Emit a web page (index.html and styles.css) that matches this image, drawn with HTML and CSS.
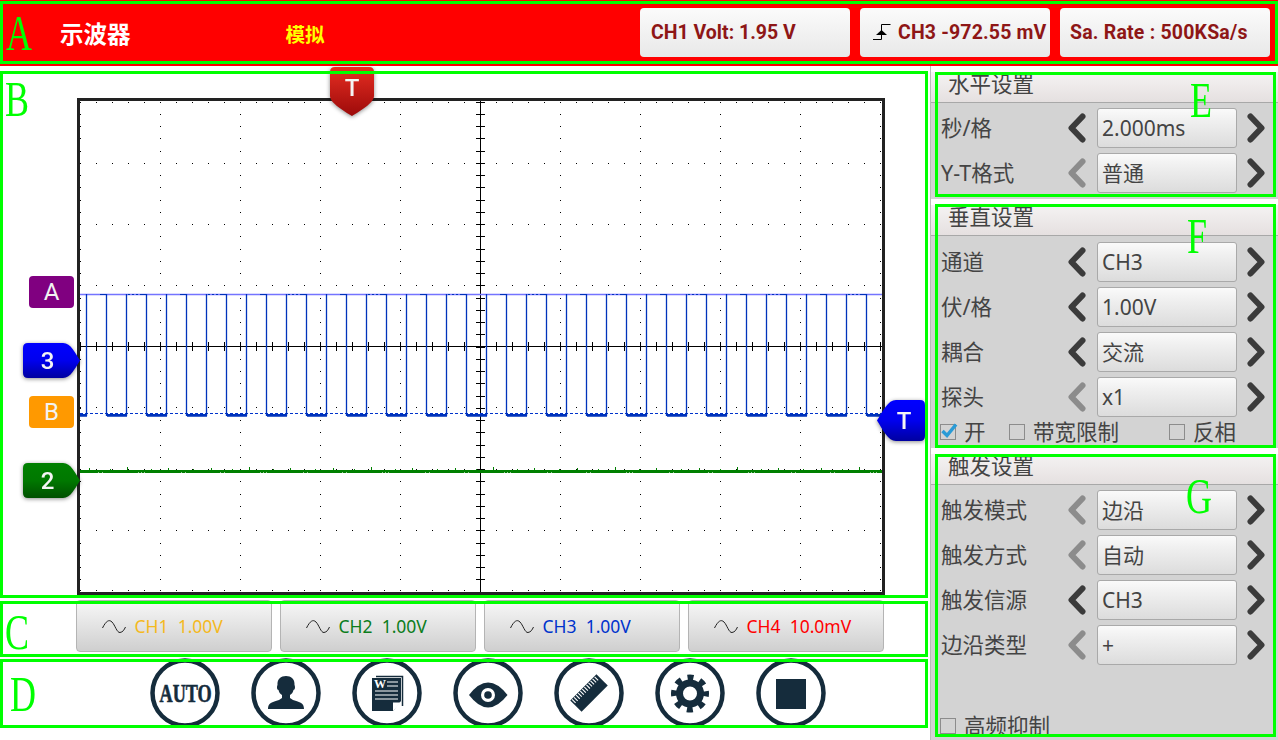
FILE: index.html
```html
<!DOCTYPE html>
<html lang="zh-CN">
<head>
    <meta charset="UTF-8">
    <meta name="viewport" content="width=device-width, initial-scale=1.0">
    <title>示波器</title>
    <link rel="stylesheet" href="styles.css">
</head>
<body>
    <svg class="defs" width="0" height="0">
        <defs>
            <linearGradient id="gradBlue" x1="0" y1="0" x2="0" y2="1"><stop offset="0" stop-color="#0000ff"/><stop offset="0.5" stop-color="#0000ee"/><stop offset="1" stop-color="#0000a0"/></linearGradient>
            <linearGradient id="gradGreen" x1="0" y1="0" x2="0" y2="1"><stop offset="0" stop-color="#008000"/><stop offset="0.5" stop-color="#007800"/><stop offset="1" stop-color="#005000"/></linearGradient>
            <linearGradient id="gradRed" x1="0" y1="0" x2="0" y2="1"><stop offset="0" stop-color="#e62e22"/><stop offset="1" stop-color="#9c0a0a"/></linearGradient>
        </defs>
    </svg>

    <header class="topbar">
        <span class="frame"></span>
        <span class="tag tag-a">A</span>
        <h1 class="app-title">示波器</h1>
        <span class="mode">模拟</span>
        <div class="readouts">
            <div class="readout readout-volt">CH1 Volt: 1.95 V</div>
            <div class="readout readout-trig">
                <svg class="edge-icon" width="18" height="17" viewBox="0 0 18 17">
                    <path d="M0 15.5H8.5V0.5H17.5" fill="none" stroke="#000" stroke-width="1"/>
                    <path d="M3 11L8.5 6L14 11Z" fill="#000"/>
                </svg>
                <span>CH3 -972.55 mV</span>
            </div>
            <div class="readout readout-rate">Sa. Rate : 500KSa/s</div>
        </div>
    </header>

    <div class="workspace">
        <main class="left">
            <section class="scope-area">
                <div class="scope">
                    <svg class="trace" width="802" height="491" viewBox="0 0 802 491">
                        <defs>
                            <pattern id="wave" patternUnits="userSpaceOnUse" x="-4" y="0" width="80" height="491">
                                <path d="M10.500 193V315M30.500 193V315M50.500 193V315M70.500 193V315" stroke="#0033bb" stroke-width="1.300" fill="none"/>
                                <path d="M24 193.500H31M52 193.500H54M56 193.500H58M60 193.500H62M64 193.500H71" stroke="#0033bb" fill="none"/>
                                <path d="M0 314.300H11M31 314.300H51M71 314.300H80" stroke="#0033bb" stroke-width="2.700" fill="none"/>
                            </pattern>
                            <pattern id="noise" patternUnits="userSpaceOnUse" x="0" y="360" width="122" height="20">
                                <path d="M9.500 7v2M30.500 8v1M47.500 6v3M71.500 8v1M88.500 7v2M113.500 8v1" stroke="#008000" fill="none"/>
                                <path d="M18.500 11v1M22.500 11v1M58.500 11v1M61.500 11v1M64.500 11v1M101.500 11v1M105.500 11v1" stroke="#fff" stroke-opacity="0.600" fill="none"/>
                            </pattern>
                        </defs>
                        <g class="dots-row">
                            <line x1="0" y1="1.5" x2="802" y2="1.5"/>
                            <line x1="0" y1="62.5" x2="802" y2="62.5"/>
                            <line x1="0" y1="123.5" x2="802" y2="123.5"/>
                            <line x1="0" y1="184.5" x2="802" y2="184.5"/>
                            <line x1="0" y1="306.5" x2="802" y2="306.5"/>
                            <line x1="0" y1="368.5" x2="802" y2="368.5"/>
                            <line x1="0" y1="429.5" x2="802" y2="429.5"/>
                            <line x1="0" y1="489.5" x2="802" y2="489.5"/>
                        </g>
                        <g class="dots-col">
                            <line x1="0.5" y1="1" x2="0.5" y2="491"/>
                            <line x1="80.5" y1="1" x2="80.5" y2="491"/>
                            <line x1="160.5" y1="1" x2="160.5" y2="491"/>
                            <line x1="240.5" y1="1" x2="240.5" y2="491"/>
                            <line x1="320.5" y1="1" x2="320.5" y2="491"/>
                            <line x1="480.5" y1="1" x2="480.5" y2="491"/>
                            <line x1="560.5" y1="1" x2="560.5" y2="491"/>
                            <line x1="640.5" y1="1" x2="640.5" y2="491"/>
                            <line x1="720.5" y1="1" x2="720.5" y2="491"/>
                            <line x1="800.5" y1="1" x2="800.5" y2="491"/>
                        </g>
                        <line class="axis" x1="0" y1="245.5" x2="802" y2="245.5"/>
                        <line class="axis" x1="400.5" y1="0" x2="400.5" y2="491"/>
                        <line class="ticks-x" x1="0" y1="245.5" x2="802" y2="245.5"/>
                        <line class="ticks-y" x1="400.5" y1="1" x2="400.5" y2="491"/>
                        <line class="cursor-a" x1="0" y1="193.5" x2="802" y2="193.5"/>
                        <line class="cursor-b" x1="0" y1="312.5" x2="802" y2="312.5"/>
                        <rect x="0" y="0" width="802" height="491" fill="url(#wave)"/>
                        <rect x="0" y="369" width="802" height="3" fill="#008000"/>
                        <rect x="0" y="360" width="802" height="20" fill="url(#noise)"/>
                    </svg>
                </div>

                <div class="marker marker-a">A</div>
                <div class="marker marker-b">B</div>
                <svg class="pin pin-3" width="57" height="35" viewBox="0 0 57 35">
                    <path d="M5 0H40C48 0 52 10 57 17.5C52 25 48 35 40 35H5Q0 35 0 30V5Q0 0 5 0Z" fill="url(#gradBlue)"/>
                    <text x="24.5" y="26">3</text>
                </svg>
                <svg class="pin pin-2" width="57" height="35" viewBox="0 0 57 35">
                    <path d="M5 0H40C48 0 52 10 57 17.5C52 25 48 35 40 35H5Q0 35 0 30V5Q0 0 5 0Z" fill="url(#gradGreen)"/>
                    <text x="24.5" y="26">2</text>
                </svg>
                <svg class="pin pin-t-right" width="48" height="41" viewBox="0 0 48 41">
                    <path d="M43 0H19C11 0 6 11 0 20.5C6 30 11 41 19 41H43Q48 41 48 36V5Q48 0 43 0Z" fill="url(#gradBlue)"/>
                    <text x="27" y="29">T</text>
                </svg>
                <svg class="pin pin-t-top" width="44" height="49" viewBox="0 0 44 49">
                    <path d="M5 0H39Q44 0 44 5V29C44 36 30 44 22 49C14 44 0 36 0 29V5Q0 0 5 0Z" fill="url(#gradRed)"/>
                    <text x="22" y="29">T</text>
                </svg>

                <span class="frame"></span>
                <span class="tag tag-b">B</span>
            </section>

            <section class="channels">
                <button class="channel ch1"><svg class="sine" width="24" height="15" viewBox="0 0 24 15"><path d="M0.5 9C4 2 7 0 10 3S15 14 18 13.500S22 11 23.500 8"/></svg>CH1&nbsp; 1.00V</button>
                <button class="channel ch2"><svg class="sine" width="24" height="15" viewBox="0 0 24 15"><path d="M0.5 9C4 2 7 0 10 3S15 14 18 13.500S22 11 23.500 8"/></svg>CH2&nbsp; 1.00V</button>
                <button class="channel ch3"><svg class="sine" width="24" height="15" viewBox="0 0 24 15"><path d="M0.5 9C4 2 7 0 10 3S15 14 18 13.500S22 11 23.500 8"/></svg>CH3&nbsp; 1.00V</button>
                <button class="channel ch4"><svg class="sine" width="24" height="15" viewBox="0 0 24 15"><path d="M0.5 9C4 2 7 0 10 3S15 14 18 13.500S22 11 23.500 8"/></svg>CH4&nbsp; 10.0mV</button>
                <span class="frame"></span>
                <span class="tag tag-c">C</span>
            </section>

            <section class="toolbar">
                <svg class="tool" viewBox="0 0 70 70">
                    <circle class="ring" cx="35" cy="35" r="32.500"/>
                    <text class="auto-text" transform="translate(9.500 43.500) scale(0.7 1)">AUTO</text>
                </svg>
                <svg class="tool" viewBox="0 0 70 70">
                    <circle class="ring" cx="35" cy="35" r="32.500"/>
                    <path class="ink" d="M17 51C17 45 21 44 28 42L31 40V37C29 36 28 34 27.500 32C26 32 25.500 29 26.500 27C26 21 30 18 35 18S44 21 43.500 27C44.500 29 44 32 42.500 32C42 34 41 36 39 37V40L42 42C49 44 53 45 53 51Z"/>
                </svg>
                <svg class="tool" viewBox="0 0 70 70">
                    <circle class="ring" cx="35" cy="35" r="32.500"/>
                    <path d="M24 18.500H50.500V48" fill="none" stroke="#152c3c" stroke-width="1.500"/>
                    <path class="ink" d="M20 20H49V43L41 53H20Z"/>
                    <path d="M41 53V44.500H49Z" fill="#fff"/>
                    <text class="doc-w" x="22" y="30">W</text>
                    <path d="M35 24H46M35 28H46M23 33H46M23 37H46M23 41H46" stroke="#fff" stroke-width="1.200" fill="none"/>
                </svg>
                <svg class="tool" viewBox="0 0 70 70">
                    <circle class="ring" cx="35" cy="35" r="32.500"/>
                    <path class="ink" d="M16 37Q35 12 54.500 37Q35 62 16 37Z"/>
                    <circle cx="35" cy="37" r="7" fill="#fff"/>
                    <circle class="ink" cx="35" cy="37" r="3.800"/>
                </svg>
                <svg class="tool" viewBox="0 0 70 70">
                    <circle class="ring" cx="35" cy="35" r="32.500"/>
                    <g transform="rotate(-45 35 35)">
                        <rect class="ink" x="16.500" y="27" width="37" height="16"/>
                        <line x1="18" y1="30" x2="52" y2="30" stroke="#fff" stroke-width="5" stroke-dasharray="1.100 1.800"/>
                    </g>
                </svg>
                <svg class="tool" viewBox="0 0 70 70">
                    <circle class="ring" cx="35" cy="35" r="32.500"/>
                    <circle cx="35" cy="35.500" r="10.500" fill="none" stroke="#152c3c" stroke-width="7"/>
                    <circle cx="35" cy="35.500" r="16" fill="none" stroke="#152c3c" stroke-width="6" stroke-dasharray="6 6.570" stroke-dashoffset="3"/>
                </svg>
                <svg class="tool" viewBox="0 0 70 70">
                    <circle class="ring" cx="35" cy="35" r="32.500"/>
                    <rect class="ink" x="20" y="21" width="30" height="30"/>
                </svg>
                <span class="frame"></span>
                <span class="tag tag-d">D</span>
            </section>
        </main>

        <aside class="side">
            <section class="panel panel-e">
                <h2 class="panel-head">水平设置</h2>
                <div class="rows">
                    <div class="row">
                        <span class="row-label">秒/格</span>
                        <svg class="chev" viewBox="0 0 20 30"><path d="M15.500 3.500L4.500 15L15.500 26.500"/></svg>
                        <span class="value">2.000ms</span>
                        <svg class="chev" viewBox="0 0 20 30"><path d="M4.500 3.500L15.500 15L4.500 26.500"/></svg>
                    </div>
                    <div class="row">
                        <span class="row-label">Y-T格式</span>
                        <svg class="chev off" viewBox="0 0 20 30"><path d="M15.500 3.500L4.500 15L15.500 26.500"/></svg>
                        <span class="value cn">普通</span>
                        <svg class="chev" viewBox="0 0 20 30"><path d="M4.500 3.500L15.500 15L4.500 26.500"/></svg>
                    </div>
                </div>
                <span class="frame"></span>
                <span class="tag tag-e">E</span>
            </section>

            <section class="panel panel-f">
                <h2 class="panel-head">垂直设置</h2>
                <div class="rows">
                    <div class="row">
                        <span class="row-label">通道</span>
                        <svg class="chev" viewBox="0 0 20 30"><path d="M15.500 3.500L4.500 15L15.500 26.500"/></svg>
                        <span class="value">CH3</span>
                        <svg class="chev" viewBox="0 0 20 30"><path d="M4.500 3.500L15.500 15L4.500 26.500"/></svg>
                    </div>
                    <div class="row">
                        <span class="row-label">伏/格</span>
                        <svg class="chev" viewBox="0 0 20 30"><path d="M15.500 3.500L4.500 15L15.500 26.500"/></svg>
                        <span class="value">1.00V</span>
                        <svg class="chev" viewBox="0 0 20 30"><path d="M4.500 3.500L15.500 15L4.500 26.500"/></svg>
                    </div>
                    <div class="row">
                        <span class="row-label">耦合</span>
                        <svg class="chev" viewBox="0 0 20 30"><path d="M15.500 3.500L4.500 15L15.500 26.500"/></svg>
                        <span class="value cn">交流</span>
                        <svg class="chev" viewBox="0 0 20 30"><path d="M4.500 3.500L15.500 15L4.500 26.500"/></svg>
                    </div>
                    <div class="row">
                        <span class="row-label">探头</span>
                        <svg class="chev off" viewBox="0 0 20 30"><path d="M15.500 3.500L4.500 15L15.500 26.500"/></svg>
                        <span class="value">x1</span>
                        <svg class="chev" viewBox="0 0 20 30"><path d="M4.500 3.500L15.500 15L4.500 26.500"/></svg>
                    </div>
                </div>
                <div class="checks">
                    <span class="check"><span class="box"><svg class="tick" width="18" height="16" viewBox="0 0 18 16"><path d="M2.500 8L7 12.500L16 1.500"/></svg></span>开</span>
                    <span class="check"><span class="box"></span>带宽限制</span>
                    <span class="check"><span class="box"></span>反相</span>
                </div>
                <span class="frame"></span>
                <span class="tag tag-f">F</span>
            </section>

            <section class="panel panel-g">
                <h2 class="panel-head">触发设置</h2>
                <div class="rows">
                    <div class="row">
                        <span class="row-label">触发模式</span>
                        <svg class="chev off" viewBox="0 0 20 30"><path d="M15.500 3.500L4.500 15L15.500 26.500"/></svg>
                        <span class="value cn">边沿</span>
                        <svg class="chev" viewBox="0 0 20 30"><path d="M4.500 3.500L15.500 15L4.500 26.500"/></svg>
                    </div>
                    <div class="row">
                        <span class="row-label">触发方式</span>
                        <svg class="chev off" viewBox="0 0 20 30"><path d="M15.500 3.500L4.500 15L15.500 26.500"/></svg>
                        <span class="value cn">自动</span>
                        <svg class="chev" viewBox="0 0 20 30"><path d="M4.500 3.500L15.500 15L4.500 26.500"/></svg>
                    </div>
                    <div class="row">
                        <span class="row-label">触发信源</span>
                        <svg class="chev" viewBox="0 0 20 30"><path d="M15.500 3.500L4.500 15L15.500 26.500"/></svg>
                        <span class="value">CH3</span>
                        <svg class="chev" viewBox="0 0 20 30"><path d="M4.500 3.500L15.500 15L4.500 26.500"/></svg>
                    </div>
                    <div class="row">
                        <span class="row-label">边沿类型</span>
                        <svg class="chev off" viewBox="0 0 20 30"><path d="M15.500 3.500L4.500 15L15.500 26.500"/></svg>
                        <span class="value">+</span>
                        <svg class="chev" viewBox="0 0 20 30"><path d="M4.500 3.500L15.500 15L4.500 26.500"/></svg>
                    </div>
                </div>
                <div class="checks checks-bottom">
                    <span class="check"><span class="box"></span>高频抑制</span>
                </div>
                <span class="frame"></span>
                <span class="tag tag-g">G</span>
            </section>
        </aside>
    </div>
</body>
</html>
```

FILE: styles.css
```css
* {
    box-sizing: border-box;
}
html, body {
    margin: 0;
    padding: 0;
    height: 740px;
    overflow: hidden;
    background: #fff;
}
body {
    width: 1278px;
    font-family: "Noto Sans", "Noto Sans CJK SC", sans-serif;
    color: #444;
}
.defs {
    position: absolute;
}

/* green annotation boxes and letters sit over everything */
.frame {
    position: absolute;
    left: 0;
    right: 0;
    top: 0;
    bottom: 0;
    border: 3px solid #00ff00;
    pointer-events: none;
}
.tag {
    position: absolute;
    font-family: "Liberation Serif", serif;
    font-size: 50px;
    line-height: 50px;
    color: #00ff00;
    transform: scaleX(0.72);
    transform-origin: left top;
}

/* top bar */
.topbar {
    position: relative;
    height: 66px;
    background: #ff0000;
    display: flex;
    align-items: center;
}
.topbar .frame {
    top: 1px;
    bottom: 2px;
}
.tag-a { left: 6px; top: 8px; }
.app-title {
    margin: 0 0 0 60px;
    font-size: 23.500px;
    font-weight: 700;
    color: #fff;
}
.mode {
    margin-left: 155px;
    font-size: 19.500px;
    font-weight: 700;
    color: #ffff00;
}
.readouts {
    margin-left: auto;
    margin-right: 8px;
    margin-top: -2px;
    display: flex;
    gap: 10px;
}
.readout {
    height: 49px;
    display: flex;
    align-items: center;
    border-radius: 4px;
    background: linear-gradient(#fbfbfb, #e8e8e8);
    font-family: Roboto, sans-serif;
    font-size: 19.500px;
    font-weight: 700;
    color: #8e1616;
    white-space: nowrap;
}
.readout-volt { width: 210px; padding-left: 11px; }
.readout-trig { width: 190px; padding-left: 13px; letter-spacing: 0.15px; }
.readout-rate { width: 210px; padding-left: 10px; letter-spacing: 0.2px; }
.edge-icon {
    margin-right: 7px;
    flex: none;
}

/* main area */
.workspace {
    display: flex;
    height: 674px;
}
.left {
    width: 930px;
    flex: none;
}
.scope-area {
    position: relative;
    width: 928px;
    height: 527px;
    margin-top: 5px;
    padding: 27px 0 0 77px;
}
.scope {
    width: 808px;
    height: 497px;
    border: 3px solid #222;
}
.trace {
    display: block;
}
.dots-row line {
    stroke: #000;
    stroke-width: 1;
    stroke-dasharray: 1 15;
}
.dots-col line {
    stroke: #000;
    stroke-width: 1;
    stroke-dasharray: 1 11 1 11 1 11 1 12;
}
.axis {
    stroke: #000;
    stroke-width: 1;
}
.ticks-x {
    stroke: #000;
    stroke-width: 9;
    stroke-dasharray: 1 15;
}
.ticks-y {
    stroke: #000;
    stroke-width: 9;
    stroke-dasharray: 1 11 1 11 1 11 1 12;
}
.cursor-a {
    stroke: #7474ff;
    stroke-width: 1.400;
}
.cursor-b {
    stroke: #0033cc;
    stroke-width: 1;
    stroke-dasharray: 3 2;
}

/* markers over the scope */
.marker {
    position: absolute;
    left: 29px;
    width: 45px;
    height: 32px;
    border-radius: 4px;
    display: flex;
    align-items: center;
    justify-content: center;
    font-family: Roboto, sans-serif;
    font-size: 24px;
    color: #f2f2f2;
}
.marker-a { top: 205px; background: #800080; }
.marker-b { top: 325px; background: #ff9900; }
.pin {
    position: absolute;
    overflow: visible;
    filter: drop-shadow(0 1px 2px rgba(0, 0, 0, 0.45));
}
.pin text {
    font-family: Roboto, sans-serif;
    font-size: 24px;
    font-weight: 500;
    fill: #f4f4f4;
    text-anchor: middle;
}
.pin-3 { left: 23px; top: 272px; }
.pin-2 { left: 23px; top: 392px; }
.pin-t-right { left: 877px; top: 329px; }
.pin-t-top { left: 330px; top: -4px; }
.tag-b { left: 5px; top: 3px; }

/* channel buttons */
.channels {
    position: relative;
    width: 928px;
    height: 57px;
    margin-top: 2px;
    padding-left: 76px;
    display: flex;
    gap: 8px;
    align-items: flex-start;
}
.channels .frame {
    top: 1px;
}
.channel {
    width: 196px;
    height: 52px;
    padding: 0 0 0 25px;
    display: flex;
    align-items: center;
    border: 1px solid #b4b4b4;
    border-radius: 4px;
    background: linear-gradient(#f7f7f7, #cfcfcf);
    font-family: "Noto Sans", sans-serif;
    font-size: 17.500px;
    white-space: pre;
}
.sine {
    margin-right: 8.500px;
    flex: none;
}
.sine path {
    fill: none;
    stroke: #222;
    stroke-width: 1;
}
.ch1 { color: #f4b91f; }
.ch2 { color: #0c7d1c; }
.ch3 { color: #0033cc; }
.ch4 { color: #ff0000; }
.tag-c { left: 5px; top: 7px; }

/* bottom toolbar */
.toolbar {
    position: relative;
    width: 928px;
    height: 69px;
    margin-top: 2px;
    display: flex;
    justify-content: center;
    align-items: center;
    gap: 31px;
    padding-left: 48px;
}
.tool {
    width: 70px;
    height: 70px;
    flex: none;
    margin-top: -2px;
}
.ring {
    fill: #fff;
    stroke: #152c3c;
    stroke-width: 4.500;
}
.ink {
    fill: #152c3c;
}
.auto-text {
    font-family: "Liberation Serif", serif;
    font-size: 26px;
    font-weight: 700;
    fill: #152c3c;
    stroke: #152c3c;
    stroke-width: 0.6;
}
.doc-w {
    font-family: "Liberation Serif", serif;
    font-size: 12px;
    font-weight: 700;
    fill: #fff;
}
.tag-d { left: 10px; top: 10px; }

/* right side panels */
.side {
    flex: 1;
    padding-top: 6px;
    border-left: 1px solid #bbb;
    display: flex;
    flex-direction: column;
}
.panel {
    position: relative;
    background: #d3d3d3;
}
.panel .frame {
    left: 4px;
    right: 2px;
}
.panel-e { height: 127px; }
.panel-e .frame { bottom: 2px; }
.panel-f {
    height: 243px;
    margin-top: 6px;
}
.panel-f .frame { top: -1px; }
.panel-g {
    height: 286px;
    margin-top: 6px;
    display: flex;
    flex-direction: column;
}
.panel-g .frame { bottom: 3px; }
.panel-head {
    margin: 0;
    height: 31px;
    padding-left: 17px;
    border-bottom: 1px solid #a8a8a8;
    background: linear-gradient(#f5f3f3, #e5e0e0);
    font-size: 21.500px;
    font-weight: 400;
    line-height: 24px;
    color: #444;
}
.rows {
    padding: 5px 0 0 10px;
    display: flex;
    flex-direction: column;
    gap: 5px;
}
.panel-f .rows {
    padding-top: 6px;
}
.row {
    height: 40px;
    display: flex;
    align-items: center;
}
.row-label {
    width: 126px;
    padding-bottom: 3px;
    font-size: 21.500px;
    white-space: nowrap;
}
.chev {
    width: 20px;
    height: 30px;
    flex: none;
}
.chev path {
    fill: none;
    stroke: #3b3b3b;
    stroke-width: 6;
    stroke-linecap: round;
    stroke-linejoin: round;
}
.chev.off path {
    stroke: #8c8c8c;
}
.value {
    width: 140px;
    height: 40px;
    margin: 0 9px 0 10px;
    padding-left: 4px;
    display: flex;
    align-items: center;
    border: 1px solid #a9a9a9;
    border-radius: 3px;
    background: linear-gradient(#fafafa, #f0f0f0 30%, #dcdcdc);
    font-size: 21px;
}
.value.cn {
    padding-bottom: 3px;
}
.checks {
    height: 18px;
    margin-top: 6px;
    padding-left: 9px;
    display: grid;
    grid-template-columns: 69px 160px auto;
    font-size: 21.500px;
    line-height: 18px;
}
.checks-bottom {
    margin-top: auto;
    margin-bottom: 5px;
}
.check {
    display: flex;
    align-items: center;
    white-space: nowrap;
}
.box {
    position: relative;
    width: 16px;
    height: 16px;
    margin-right: 8px;
    flex: none;
    border: 1px solid #8c8c8c;
}
.tick {
    position: absolute;
    left: -1px;
    top: -2px;
    overflow: visible;
}
.tick path {
    fill: none;
    stroke: #2a9bd6;
    stroke-width: 3.500;
}
.tag-e { left: 259px; top: 3px; }
.tag-f { left: 256px; top: 6px; }
.tag-g { left: 255px; top: 17px; }
```
